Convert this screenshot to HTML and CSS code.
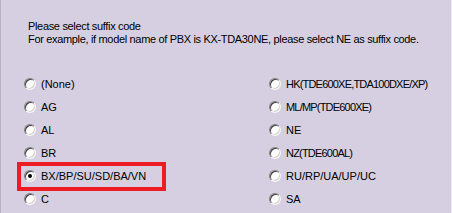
FILE: index.html
```html
<!DOCTYPE html>
<html lang="en">

<head>
    <meta charset="UTF-8" />
    <title>Suffix code</title>
    <link rel="stylesheet" href="styles.css">
</head>

<body>

    <div class="panel">
        <p class="intro">
            Please select suffix code<br>
            For example, if model name of PBX is KX-TDA30NE, please select NE as suffix code.
        </p>

        <div class="options">
            <label class="option"><span class="radio"></span>(None)</label>
            <label class="option narrow"><span class="radio"></span>HK(TDE600XE,TDA100DXE/XP)</label>
            <label class="option"><span class="radio"></span>AG</label>
            <label class="option narrow"><span class="radio"></span>ML/MP(TDE600XE)</label>
            <label class="option"><span class="radio"></span>AL</label>
            <label class="option"><span class="radio"></span>NE</label>
            <label class="option"><span class="radio"></span>BR</label>
            <label class="option narrow"><span class="radio"></span>NZ(TDE600AL)</label>
            <label class="option highlight"><span class="radio checked"></span>BX/BP/SU/SD/BA/VN</label>
            <label class="option"><span class="radio"></span>RU/RP/UA/UP/UC</label>
            <label class="option"><span class="radio"></span>C</label>
            <label class="option"><span class="radio"></span>SA</label>
        </div>
    </div>

</body>

</html>
```

FILE: styles.css
```css
body {
    margin: 0;
}

.panel {
    width: 452px;
    height: 213px;
    box-sizing: border-box;
    background: #d5cfe1;
    border-left: 1px solid #b8b2c4;
    border-right: 1px solid #ece9f2;
    font-family: "Liberation Sans", Arial, sans-serif;
    font-size: 11px;
    color: #000;
    overflow: hidden;
}

.intro {
    margin: 0;
    padding: 20px 0 0 27px;
    line-height: 13px;
    letter-spacing: -0.33px;
}

.options {
    display: grid;
    grid-template-columns: 245px 1fr;
    grid-auto-rows: 23px;
    margin-top: 26px;
    padding-left: 23px;
}

.option {
    position: relative;
    display: flex;
    align-items: center;
    gap: 5px;
    white-space: nowrap;
}

.option.narrow {
    letter-spacing: -0.8px;
}

.radio {
    width: 12px;
    height: 12px;
    flex: none;
    border-radius: 50%;
    box-sizing: border-box;
    background: #fff;
    border: 1px solid;
    border-color: #808080 #f4f4f4 #f4f4f4 #808080;
    box-shadow: inset 1px 1px 0 #404040, inset -1px -1px 0 #d4d0c8;
    position: relative;
}

.radio.checked::after {
    content: "";
    position: absolute;
    left: 3px;
    top: 3px;
    width: 4px;
    height: 4px;
    border-radius: 50%;
    background: #000;
}

/* red highlight box drawn over the row */
.highlight::before {
    content: "";
    position: absolute;
    left: -7px;
    top: -2px;
    width: 141px;
    height: 21px;
    border: 4px solid #ed1c24;
}
```
